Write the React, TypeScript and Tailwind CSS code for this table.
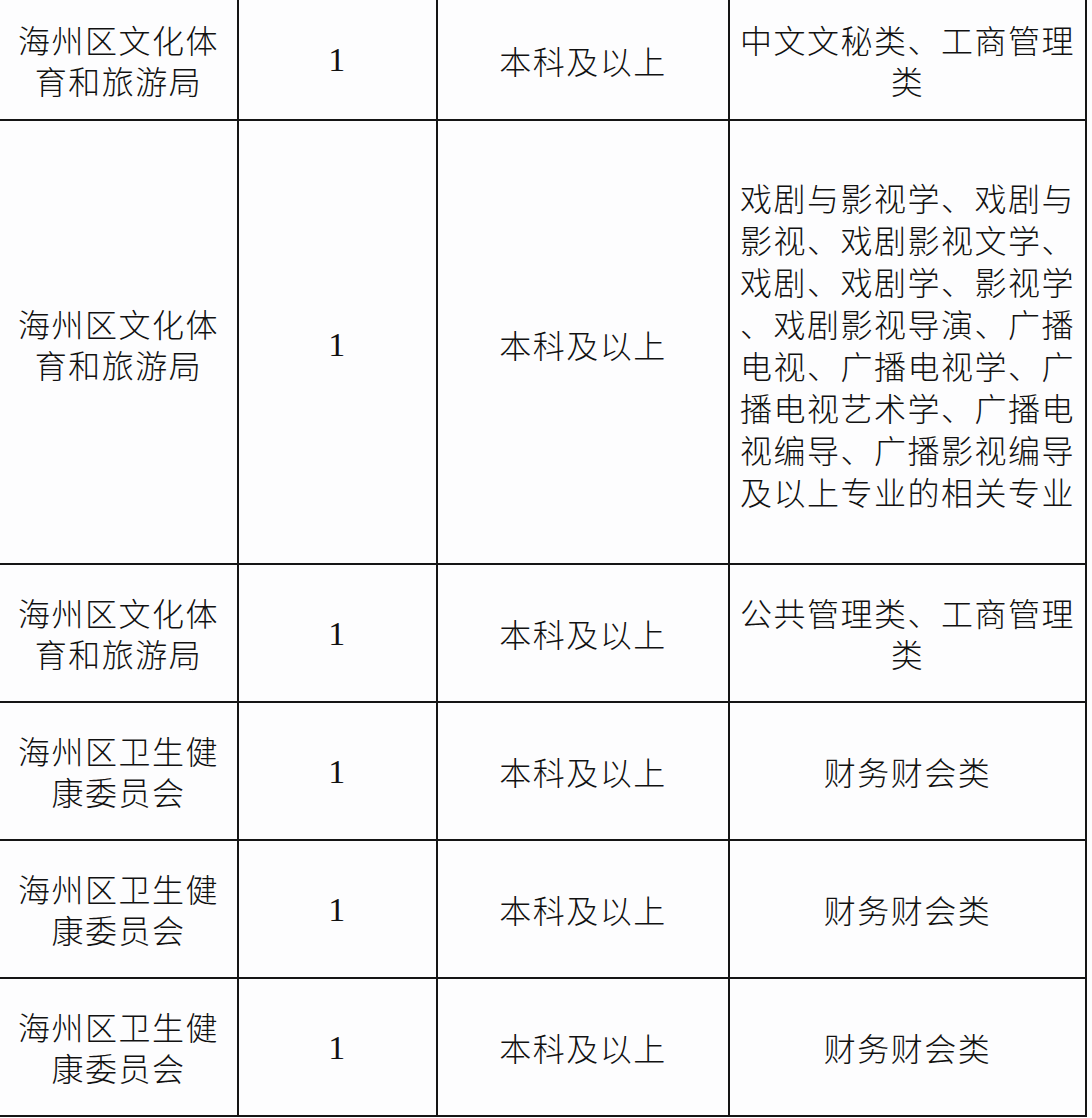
import React from "react";

type Row = {
  dept: string[];
  count: string;
  edu: string;
  major: string[];
  h: string;
  shift?: string;
};

const ROWS: Row[] = [
  {
    dept: ["海州区文化体", "育和旅游局"],
    count: "1",
    edu: "本科及以上",
    major: ["中文文秘类、工商管理", "类"],
    h: "h-[121px]",
  },
  {
    dept: ["海州区文化体", "育和旅游局"],
    count: "1",
    edu: "本科及以上",
    major: [
      "戏剧与影视学、戏剧与",
      "影视、戏剧影视文学、",
      "戏剧、戏剧学、影视学",
      "、戏剧影视导演、广播",
      "电视、广播电视学、广",
      "播电视艺术学、广播电",
      "视编导、广播影视编导",
      "及以上专业的相关专业",
    ],
    h: "h-[444px]",
    shift: "pt-1",
  },
  {
    dept: ["海州区文化体", "育和旅游局"],
    count: "1",
    edu: "本科及以上",
    major: ["公共管理类、工商管理", "类"],
    h: "h-[138px]",
  },
  {
    dept: ["海州区卫生健", "康委员会"],
    count: "1",
    edu: "本科及以上",
    major: ["财务财会类"],
    h: "h-[138px]",
  },
  {
    dept: ["海州区卫生健", "康委员会"],
    count: "1",
    edu: "本科及以上",
    major: ["财务财会类"],
    h: "h-[138px]",
  },
  {
    dept: ["海州区卫生健", "康委员会"],
    count: "1",
    edu: "本科及以上",
    major: ["财务财会类"],
    h: "h-[138px]",
  },
];

const cjk = "font-['Noto_Sans_CJK_SC','Noto_Sans',sans-serif]";

const Lines: React.FC<{ lines: string[]; leading: string }> = ({ lines, leading }) => (
  <div className={`flex flex-col items-center ${leading}`}>
    {lines.map((l, i) => (
      <div key={i} className="whitespace-nowrap">
        {l}
      </div>
    ))}
  </div>
);

export default function App() {
  return (
    <div className="w-[1092px] h-[1118px] bg-[#fdfdfe] overflow-hidden text-[#111]">
      <div className={`grid grid-cols-[239px_199px_292px_357px] ${cjk} text-[32px] tracking-[1.5px] font-light`}>
        {ROWS.map((r, i) => (
          <React.Fragment key={i}>
            <div className={`${r.h} ${r.shift ?? ""} border-r-2 border-b-2 border-[#151515] flex items-center justify-center`}>
              <Lines lines={r.dept} leading="leading-[41px]" />
            </div>
            <div className={`${r.h} ${r.shift ?? ""} border-r-2 border-b-2 border-[#151515] flex items-center justify-center font-['Liberation_Serif',serif] text-[34px] font-normal`}>
              {r.count}
            </div>
            <div className={`${r.h} ${r.shift ?? ""} border-r-2 border-b-2 border-[#151515] flex items-center justify-center`}>
              {r.edu}
            </div>
            <div className={`${r.h} ${r.shift ?? ""} border-r-2 border-b-2 border-[#151515] flex items-center justify-center`}>
              <Lines lines={r.major} leading={r.major.length > 2 ? "leading-[42px]" : "leading-[41px]"} />
            </div>
          </React.Fragment>
        ))}
      </div>
    </div>
  );
}
